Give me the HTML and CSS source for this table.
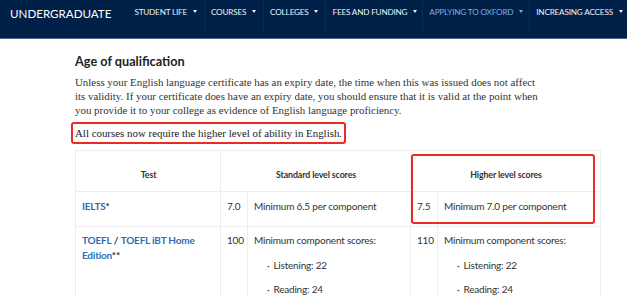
FILE: index.html
```html
<!DOCTYPE html>
<html lang="en">
<head>
    <meta charset="UTF-8">
    <meta name="viewport" content="width=device-width, initial-scale=1.0">
    <title>English language requirements</title>
    <link rel="stylesheet" href="styles.css">
</head>
<body>

    <nav class="topbar">
        <div class="brand">UNDERGRADUATE</div>
        <svg class="crumb" width="14" height="38" viewBox="0 0 14 38">
            <polyline points="2,0 12,16 2,32" fill="none" stroke="#1c3863" stroke-width="1"/>
        </svg>
        <ul class="menu">
            <li class="first">STUDENT LIFE <span class="caret"></span></li>
            <li>COURSES <span class="caret"></span></li>
            <li>COLLEGES <span class="caret"></span></li>
            <li class="tight">FEES AND FUNDING <span class="caret"></span></li>
            <li class="active">APPLYING TO OXFORD <span class="caret"></span></li>
            <li>INCREASING ACCESS <span class="caret"></span></li>
        </ul>
    </nav>

    <div class="content">
        <h2>Age of qualification</h2>
        <p class="intro">Unless your English language certificate has an expiry date, the time when this was issued does not affect its validity. If your certificate does have an expiry date, you should ensure that it is valid at the point when you provide it to your college as evidence of English language proficiency.</p>
        <p class="note">All courses now require the higher level of ability in English.</p>

        <div class="table-wrap">
            <table class="scores">
                <colgroup>
                    <col class="col-test">
                    <col class="col-num">
                    <col class="col-text">
                    <col class="col-num">
                    <col class="col-text">
                </colgroup>
                <thead>
                    <tr>
                        <th>Test</th>
                        <th colspan="2">Standard level scores</th>
                        <th colspan="2">Higher level scores</th>
                    </tr>
                </thead>
                <tbody>
                    <tr class="row-ielts">
                        <td><a href="#">IELTS</a><b>*</b></td>
                        <td>7.0</td>
                        <td>Minimum 6.5 per component</td>
                        <td>7.5</td>
                        <td>Minimum 7.0 per component</td>
                    </tr>
                    <tr>
                        <td><a href="#">TOEFL</a> <b>/</b> <a href="#">TOEFL iBT Home Edition</a><b>**</b></td>
                        <td>100</td>
                        <td>
                            Minimum component scores:
                            <ul class="parts">
                                <li>Listening: 22</li>
                                <li>Reading: 24</li>
                            </ul>
                        </td>
                        <td>110</td>
                        <td>
                            Minimum component scores:
                            <ul class="parts">
                                <li>Listening: 22</li>
                                <li>Reading: 24</li>
                            </ul>
                        </td>
                    </tr>
                </tbody>
            </table>
            <div class="highlight"></div>
        </div>
    </div>

</body>
</html>
```

FILE: styles.css
```css
body {
    margin: 0;
    padding: 0;
    background: #fff;
    color: #333;
    font-family: Lato, "Open Sans", sans-serif;
    overflow: hidden;
}
.topbar {
    display: flex;
    align-items: flex-start;
    height: 38px;
    background-color: #002147;
    border-bottom: 1px solid #4d6587;
    color: #eef1f6;
}
.brand {
    padding: 6px 7px 0 10px;
    font-size: 11.6px;
    line-height: 16px;
    color: #fff;
}
.crumb {
    display: block;
    margin-right: 3px;
}
.menu {
    display: flex;
    list-style: none;
    margin: 0;
    padding: 0;
}
.menu li {
    height: 32px;
    padding: 7px 7px 0 6px;
    box-sizing: border-box;
    font-size: 8.2px;
    letter-spacing: -0.2px;
    line-height: 11px;
    border-right: 1px solid #0c2a52;
    white-space: nowrap;
}
.menu li.first {
    padding-left: 13px;
    padding-right: 7px;
}
.menu li.tight {
    padding-right: 5px;
}
.menu li:last-child {
    border-right: none;
}
.menu li.active {
    color: #80acdf;
    padding-right: 6px;
}
.caret {
    display: inline-block;
    width: 0;
    height: 0;
    margin-left: 4px;
    vertical-align: 2px;
    border-left: 2.5px solid transparent;
    border-right: 2.5px solid transparent;
    border-top: 3px solid currentColor;
}
.content {
    padding: 0 0 0 75px;
    width: 524px;
}
.content h2 {
    margin: 14px 0 0;
    font-size: 12.7px;
    line-height: 16px;
    font-weight: 700;
    color: #222;
}
.intro {
    max-width: 468px;
    margin: 6px 0 0;
    font-family: "Liberation Serif", serif;
    font-size: 10.9px;
    line-height: 14px;
    color: #333;
}
.note {
    display: inline-block;
    margin: 5px 0 0 -4px;
    padding: 2px 2px;
    border: 2px solid #ec2a22;
    border-radius: 3px;
    font-family: "Liberation Serif", serif;
    font-size: 10.9px;
    line-height: 14px;
    color: #222;
}
.table-wrap {
    position: relative;
    margin-top: 6px;
}
.scores {
    width: 524px;
    border-collapse: collapse;
    table-layout: fixed;
    font-size: 10px;
    letter-spacing: -0.2px;
    line-height: 14.5px;
    color: #333;
}
.col-test { width: 145px; }
.col-num { width: 27px; }
.col-text { width: 163px; }
.scores th,
.scores td {
    border: 1px solid #ededed;
    padding: 6px 5px 6px 6px;
    vertical-align: top;
    text-align: left;
}
.scores th {
    height: 41px;
    box-sizing: border-box;
    padding-bottom: 9px;
    vertical-align: bottom;
    text-align: center;
    font-size: 8.8px;
    letter-spacing: -0.1px;
    color: #333;
}
.row-ielts td {
    height: 35px;
    padding-top: 7px;
    box-sizing: border-box;
}
.scores a {
    color: #2f6db3;
    font-weight: 700;
    text-decoration: none;
}
.scores b {
    color: #333;
}
.parts {
    list-style: none;
    margin: 0;
    padding: 0 0 0 13px;
}
.parts li {
    margin-top: 10px;
}
.parts li:before {
    content: "·";
    margin-right: 4px;
}
.highlight {
    position: absolute;
    left: 336px;
    top: 4px;
    width: 184px;
    height: 70px;
    box-sizing: border-box;
    border: 2px solid #ec2a22;
    border-radius: 3px;
}
```
